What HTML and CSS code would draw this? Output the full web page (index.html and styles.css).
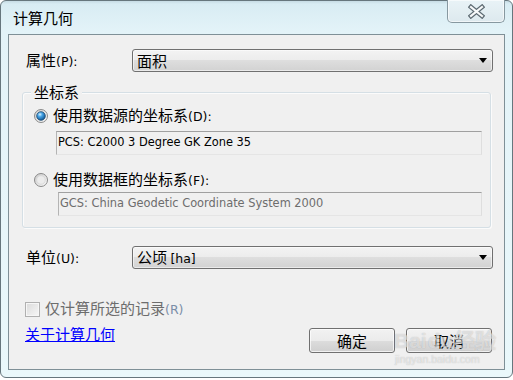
FILE: index.html
```html
<!DOCTYPE html>
<html lang="zh-CN">
<head>
<meta charset="utf-8">
<title>计算几何</title>
<link rel="stylesheet" href="styles.css">
</head>
<body>
<div class="window">
  <div class="titlebar">
    <div class="title">计算几何</div>
    <div class="close">
      <svg width="17" height="15" viewBox="0 0 17 15">
        <path d="M3 3 L14 12 M14 3 L3 12" stroke="#5d6a72" stroke-width="4.6" stroke-linecap="square" fill="none"/>
        <path d="M3 3 L14 12 M14 3 L3 12" stroke="#f6f8f9" stroke-width="2.2" stroke-linecap="square" fill="none"/>
      </svg>
    </div>
  </div>
  <div class="client">
    <div class="row row-prop">
      <div class="lbl">属性<span class="lat">(P):</span></div>
      <div class="combo"><span class="combo-text">面积</span><span class="arrow"></span></div>
    </div>

    <div class="group">
      <div class="legend">坐标系</div>
      <div class="radio-row r1">
        <svg class="radio" width="14" height="14" viewBox="0 0 14 14">
          <defs>
            <linearGradient id="ring1" x1="0" y1="0" x2="1" y2="1">
              <stop offset="0" stop-color="#cfcfcf"/>
              <stop offset="1" stop-color="#fbfbfb"/>
            </linearGradient>
            <radialGradient id="dot" cx="0.38" cy="0.32" r="0.75">
              <stop offset="0" stop-color="#d8f1ff"/>
              <stop offset="0.35" stop-color="#47a6e8"/>
              <stop offset="1" stop-color="#0b4a86"/>
            </radialGradient>
          </defs>
          <circle cx="7" cy="7" r="6.5" fill="url(#ring1)" stroke="#8a8a8a"/>
          <circle cx="7" cy="7" r="4.3" fill="url(#dot)" stroke="#1d4a70" stroke-width="0.8"/>
        </svg>
        <span class="rl">使用数据源的坐标系<span class="lat">(D):</span></span>
      </div>
      <div class="textbox tb1">PCS: C2000 3 Degree GK Zone 35</div>
      <div class="radio-row r2">
        <svg class="radio" width="14" height="14" viewBox="0 0 14 14">
          <defs>
            <linearGradient id="ring2" x1="0" y1="0" x2="1" y2="1">
              <stop offset="0" stop-color="#c8c8c8"/>
              <stop offset="1" stop-color="#fdfdfd"/>
            </linearGradient>
          </defs>
          <circle cx="7" cy="7" r="6.5" fill="url(#ring2)" stroke="#8a8a8a"/>
          <circle cx="7" cy="7" r="4.3" fill="#ececec" stroke="#d6d6d6" stroke-width="0.8"/>
        </svg>
        <span class="rl">使用数据框的坐标系<span class="lat">(F):</span></span>
      </div>
      <div class="textbox tb2">GCS: China Geodetic Coordinate System 2000</div>
    </div>

    <div class="row row-unit">
      <div class="lbl">单位<span class="lat">(U):</span></div>
      <div class="combo"><span class="combo-text">公顷 <span class="lat">[ha]</span></span><span class="arrow"></span></div>
    </div>

    <div class="bottom">
      <div class="left">
        <div class="check-row">
          <span class="checkbox"></span>
          <span class="dis">仅计算所选的记录<span class="lat">(R)</span></span>
        </div>
        <a class="about" href="#">关于计算几何</a>
      </div>
      <div class="buttons">
        <button class="btn">确定</button>
        <button class="btn">取消</button>
      </div>
    </div>

    <div class="watermark">
      <div class="wm-big">Bai<span class="wm-du">du</span>经验</div>
      <div class="wm-small">jingyan.baidu.com</div>
    </div>
  </div>
</div>
</body>
</html>
```
FILE: styles.css
```css
html, body {
  margin: 0;
  padding: 0;
  background: #ffffff;
}
body {
  width: 513px;
  height: 380px;
  overflow: hidden;
  font-family: "Noto Sans CJK SC", "DejaVu Sans", sans-serif;
  font-size: 15px;
  color: #000;
}
.window {
  box-sizing: border-box;
  width: 513px;
  height: 378px;
  border: 1px solid #66767d;
  border-radius: 6px;
  background: linear-gradient(#c6dbe4 0, #d8ecf3 3px, #e3f3f8 30px, #eaf8fb 100%);
  padding: 0 7px 7px 7px;
  display: flex;
  flex-direction: column;
}
.titlebar {
  height: 33px;
  display: flex;
  align-items: flex-start;
}
.title {
  padding: 7px 0 0 5px;
  line-height: 20px;
  font-size: 15px;
}
.close {
  margin-left: auto;
  margin-top: -1px;
  box-sizing: border-box;
  width: 58px;
  height: 23px;
  border: 1px solid #8798a0;
  border-top: none;
  border-radius: 0 0 5px 5px;
  background: linear-gradient(#e9f3f7, #dde9ee);
  box-shadow: inset 0 0 0 1px rgba(255,255,255,0.6);
  display: flex;
  justify-content: center;
  padding-top: 4px;
}
.client {
  position: relative;
  flex: 1;
  border: 1px solid #7f9097;
  background: #f0f0f0;
  display: flex;
  flex-direction: column;
}
.lat {
  font-family: "DejaVu Sans", sans-serif;
  font-size: 12.5px;
}
.row {
  display: flex;
  align-items: center;
  height: 23px;
  margin: 0 11px 0 17px;
}
.row-prop { margin-top: 14px; }
.row-unit { margin-top: 18px; }
.lbl {
  width: 106px;
  line-height: 16px;
}
.combo {
  flex: 1;
  box-sizing: border-box;
  height: 23px;
  border: 1px solid #707070;
  border-radius: 3px;
  background: linear-gradient(#f3f3f3 0, #ececec 50%, #dedede 50%, #d2d2d2 100%);
  box-shadow: inset 0 0 0 1px rgba(255,255,255,0.55);
  display: flex;
  align-items: center;
  padding-left: 4px;
  line-height: 16px;
}
.arrow {
  margin-left: auto;
  margin-right: 5px;
  width: 0;
  height: 0;
  border-left: 4px solid transparent;
  border-right: 4px solid transparent;
  border-top: 5px solid #000;
}
.group {
  margin: 20px 13px 0 13px;
  border: 1px solid #d5dfe5;
  border-radius: 3px;
  box-shadow: inset 1px 1px 0 #fbfbfb, 1px 1px 0 #fbfbfb;
  padding: 0 0 11px 0;
  display: flex;
  flex-direction: column;
}
.legend {
  margin: -9px 0 0 8px;
  padding: 0 3px;
  width: fit-content;
  background: #f0f0f0;
  line-height: 16px;
  height: 16px;
}
.radio-row {
  display: flex;
  align-items: center;
  height: 16px;
  margin-left: 11px;
  line-height: 16px;
}
.radio { flex: none; }
.rl { margin-left: 5px; }
.r1 { margin-top: 8px; }
.r2 { margin-top: 17px; }
.textbox {
  box-sizing: border-box;
  height: 24px;
  border: 1px solid;
  border-color: #a0a0a0 #dedede #e5e5e5 #b4b4b4;
  background: #f0f0f0;
  font-family: "DejaVu Sans", sans-serif;
  font-size: 11.4px;
  line-height: 21px;
  padding-left: 1px;
  white-space: nowrap;
}
.tb1 {
  margin: 7px 8px 0 33px;
  color: #000;
}
.tb2 {
  margin: 4px 8px 0 35px;
  color: #6d6d6d;
}
.bottom {
  display: flex;
  align-items: flex-start;
  margin: 0 12px 0 16px;
}
.left {
  display: flex;
  flex-direction: column;
}
.check-row {
  margin-top: 32px;
  height: 16px;
  display: flex;
  align-items: center;
  line-height: 16px;
}
.checkbox {
  box-sizing: border-box;
  width: 15px;
  height: 15px;
  border: 1px solid #b0b0b0;
  background: linear-gradient(135deg, #dadada, #f7f7f7);
  box-shadow: inset 0 0 0 1px #f6f6f6;
}
.dis {
  margin-left: 5px;
  color: #6d6d6d;
}
.dis .lat { color: #7a8ea8; }
.about {
  margin-top: 9px;
  line-height: 16px;
  color: #0000ff;
  text-decoration: underline;
  width: fit-content;
}
.buttons {
  margin-left: auto;
  margin-top: 59px;
  display: flex;
  gap: 11px;
}
.btn {
  box-sizing: border-box;
  width: 86px;
  height: 25px;
  border: 1px solid #707070;
  border-radius: 3px;
  background: linear-gradient(#f2f2f2 0, #ebebeb 50%, #dddddd 50%, #cfcfcf 100%);
  box-shadow: inset 0 0 0 1px rgba(255,255,255,0.7);
  font-family: "Noto Sans CJK SC", sans-serif;
  font-size: 15px;
  line-height: 16px;
  color: #000;
  padding: 0;
}
.watermark {
  position: absolute;
  left: 385px;
  top: 294px;
  pointer-events: none;
  color: rgba(255,255,255,0.55);
  text-shadow: 0 0 1px rgba(110,110,110,0.45);
}
.wm-big {
  font-family: "Liberation Sans", sans-serif;
  font-weight: bold;
  font-size: 21px;
  line-height: 24px;
  white-space: nowrap;
}
.wm-du { margin: 0 1px; }
.wm-small {
  font-family: "Liberation Sans", sans-serif;
  font-size: 10.5px;
  line-height: 12px;
  margin-left: 1px;
}
```
